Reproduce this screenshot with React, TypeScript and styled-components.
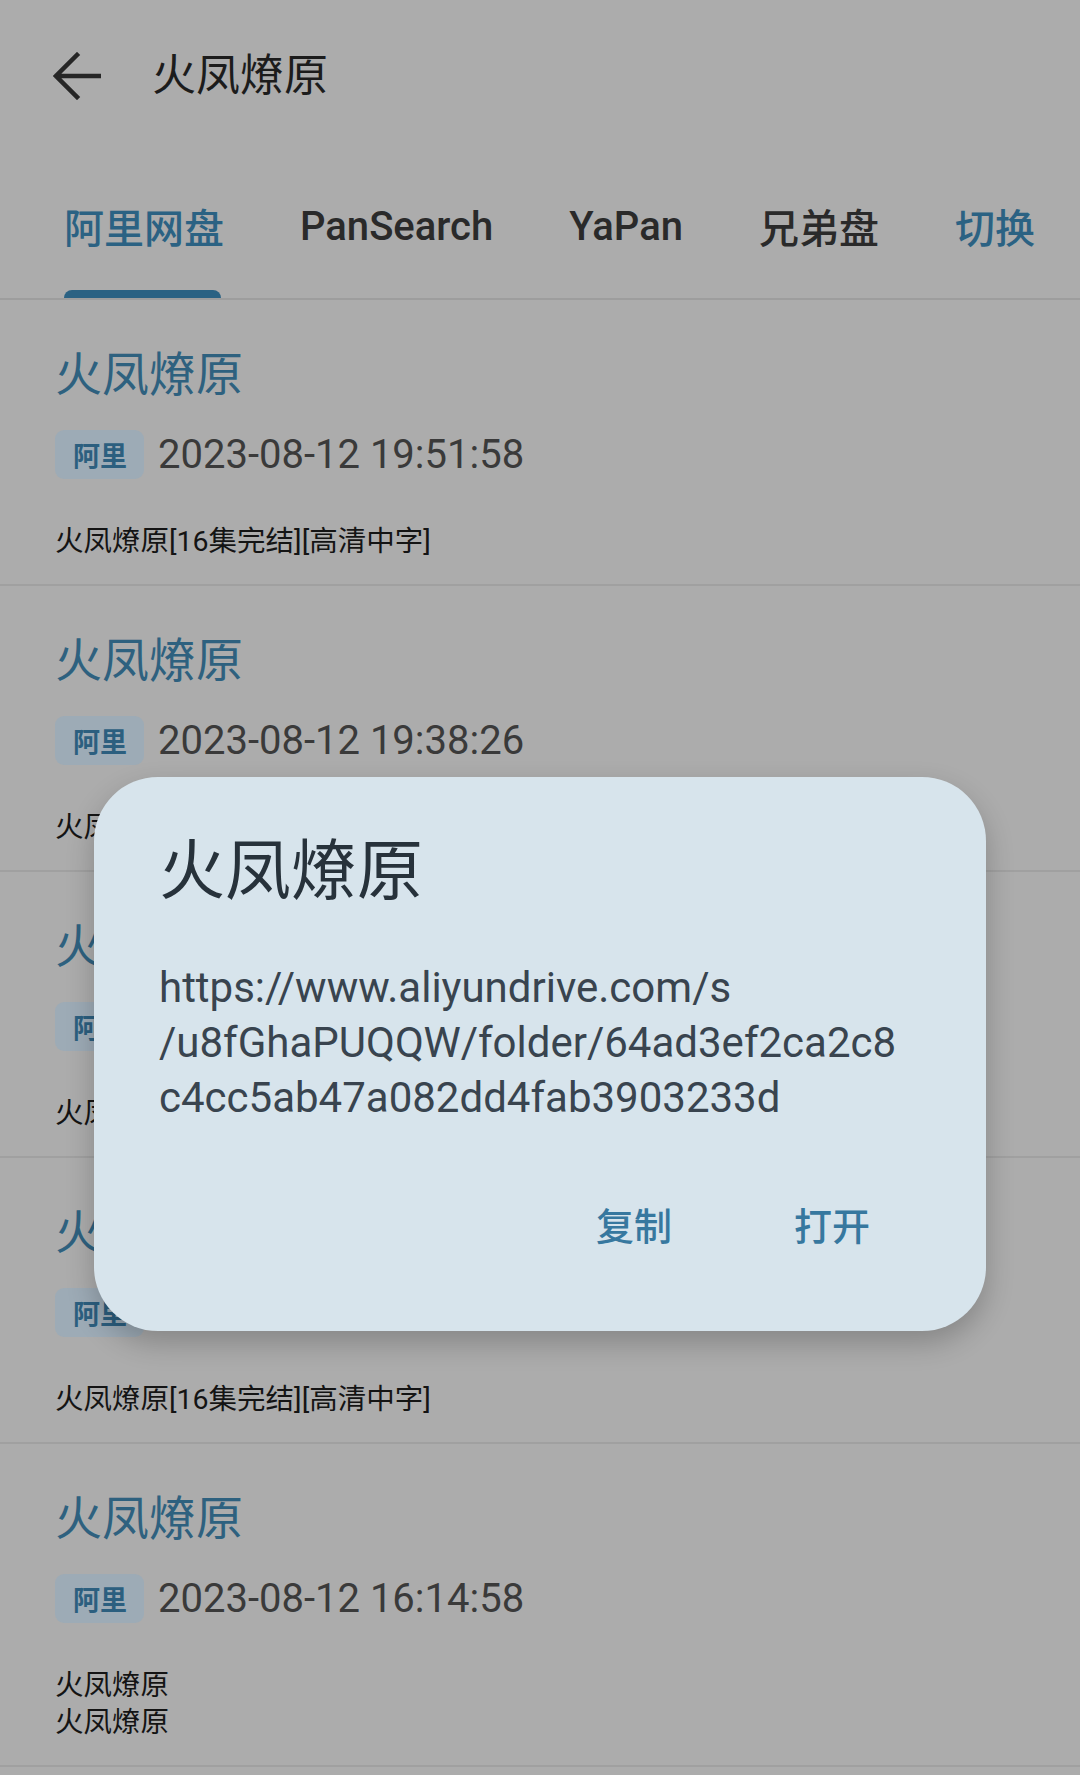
import React from "react";
import styled, { createGlobalStyle } from "styled-components";

const sans = `Roboto, "Noto Sans CJK SC", sans-serif`;

const GlobalStyle = createGlobalStyle`
  html, body {
    margin: 0;
    padding: 0;
    background: #acacac;
  }
  body {
    font-family: ${sans};
    min-height: 1775px;
  }
  * {
    box-sizing: border-box;
  }
`;

interface Result {
  title: string;
  source: string;
  time: string;
  desc: string;
}

const results: Result[] = [
  { title: "火凤燎原", source: "阿里", time: "2023-08-12 19:51:58", desc: "火凤燎原[16集完结][高清中字]" },
  { title: "火凤燎原", source: "阿里", time: "2023-08-12 19:38:26", desc: "火凤燎原[16集完结][高清中字]" },
  { title: "火凤燎原", source: "阿里", time: "2023-08-12 19:20:14", desc: "火凤燎原[16集完结][高清中字]" },
  { title: "火凤燎原", source: "阿里", time: "2023-08-12 18:42:07", desc: "火凤燎原[16集完结][高清中字]" },
  { title: "火凤燎原", source: "阿里", time: "2023-08-12 16:14:58", desc: "火凤燎原\n火凤燎原" },
];

const tabs = ["阿里网盘", "PanSearch", "YaPan", "兄弟盘"];

const Page = styled.div`
  width: 1080px;
  min-height: 1775px;
  background: #acacac;
  position: relative;
`;

const AppBar = styled.header`
  height: 152px;
  display: flex;
  align-items: center;
  padding-left: 53px;
  gap: 51px;
`;

const BackButton = styled.button`
  width: 48px;
  height: 48px;
  padding: 0;
  border: 0;
  background: none;
  display: flex;
  align-items: center;
  justify-content: center;
  color: #262626;
`;

const BarTitle = styled.h1`
  margin: 0;
  font-size: 44px;
  font-weight: 400;
  line-height: 52px;
  color: #1c1c1c;
`;

const TabBar = styled.nav`
  height: 148px;
  display: flex;
  justify-content: space-between;
  padding: 0 45px 0 64px;
  border-bottom: 2px solid #9d9d9d;
`;

const Tab = styled.div<{ $active?: boolean; $accent?: boolean }>`
  position: relative;
  display: flex;
  align-items: center;
  padding-top: 2px;
  font-size: 40px;
  font-weight: 500;
  color: ${(p) => (p.$active || p.$accent ? "#2b6283" : "#2a2a2a")};
`;

const Indicator = styled.span`
  position: absolute;
  left: 0;
  right: 3px;
  bottom: 0;
  height: 8px;
  border-radius: 8px 8px 0 0;
  background: #2b6283;
`;

const Item = styled.div`
  padding: 47px 53px 24px 55px;
  border-bottom: 2px solid #a0a0a0;
`;

const ItemTitle = styled.div`
  font-size: 47px;
  line-height: 56px;
  color: #2e617f;
`;

const MetaRow = styled.div`
  display: flex;
  align-items: center;
  gap: 14px;
  margin-top: 27px;
`;

const Tag = styled.span`
  height: 49px;
  display: inline-flex;
  align-items: center;
  padding: 0 17px 0 18px;
  border-radius: 9px;
  background: #9dabb6;
  color: #2c5f7f;
  font-size: 27px;
  font-weight: 700;
`;

const Time = styled.span`
  font-size: 40px;
  color: #3a3a3a;
`;

const Desc = styled.div`
  margin-top: 44px;
  font-size: 28.5px;
  line-height: 37px;
  color: #141414;
  white-space: pre-line;
`;

const Overlay = styled.div`
  position: absolute;
  inset: 0;
  display: flex;
  justify-content: center;
  align-items: flex-start;
  padding-top: 777px;
`;

const Dialog = styled.div`
  width: 892px;
  padding: 56px 65px 72px;
  border-radius: 64px;
  background: #d7e4ec;
  box-shadow: 0 12px 28px rgba(0, 0, 0, 0.22);
`;

const DialogTitle = styled.h2`
  margin: 0;
  font-size: 66px;
  font-weight: 400;
  line-height: 78px;
  color: #27323b;
`;

const Url = styled.p`
  margin: 49px 0 0;
  font-size: 42px;
  line-height: 55px;
  color: #39444f;
`;

const Actions = styled.div`
  display: flex;
  justify-content: flex-end;
  gap: 66px;
  margin: 62px 23px 0 0;
`;

const TextButton = styled.button`
  height: 72px;
  padding: 0 28px;
  border: 0;
  background: none;
  font-family: ${sans};
  font-size: 38px;
  font-weight: 500;
  color: #37789f;
`;

const ArrowBack = () => (
  <svg width="48" height="48" viewBox="0 0 48 48" fill="none">
    <path
      d="M46 24H4M24 3L3 24L24 45"
      stroke="currentColor"
      strokeWidth="4.5"
      strokeLinecap="square"
    />
  </svg>
);

export default function App() {
  return (
    <Page>
      <GlobalStyle />
      <AppBar>
        <BackButton>
          <ArrowBack />
        </BackButton>
        <BarTitle>火凤燎原</BarTitle>
      </AppBar>
      <TabBar>
        {tabs.map((t, i) => (
          <Tab key={t} $active={i === 0}>
            {t}
            {i === 0 && <Indicator />}
          </Tab>
        ))}
        <Tab $accent>切换</Tab>
      </TabBar>
      {results.map((r, i) => (
        <Item key={i}>
          <ItemTitle>{r.title}</ItemTitle>
          <MetaRow>
            <Tag>{r.source}</Tag>
            <Time>{r.time}</Time>
          </MetaRow>
          <Desc>{r.desc}</Desc>
        </Item>
      ))}
      <Overlay>
        <Dialog>
          <DialogTitle>火凤燎原</DialogTitle>
          <Url>
            https://www.aliyundrive.com/s
            <br />
            /u8fGhaPUQQW/folder/64ad3ef2ca2c8
            <br />
            c4cc5ab47a082dd4fab3903233d
          </Url>
          <Actions>
            <TextButton>复制</TextButton>
            <TextButton>打开</TextButton>
          </Actions>
        </Dialog>
      </Overlay>
    </Page>
  );
}
